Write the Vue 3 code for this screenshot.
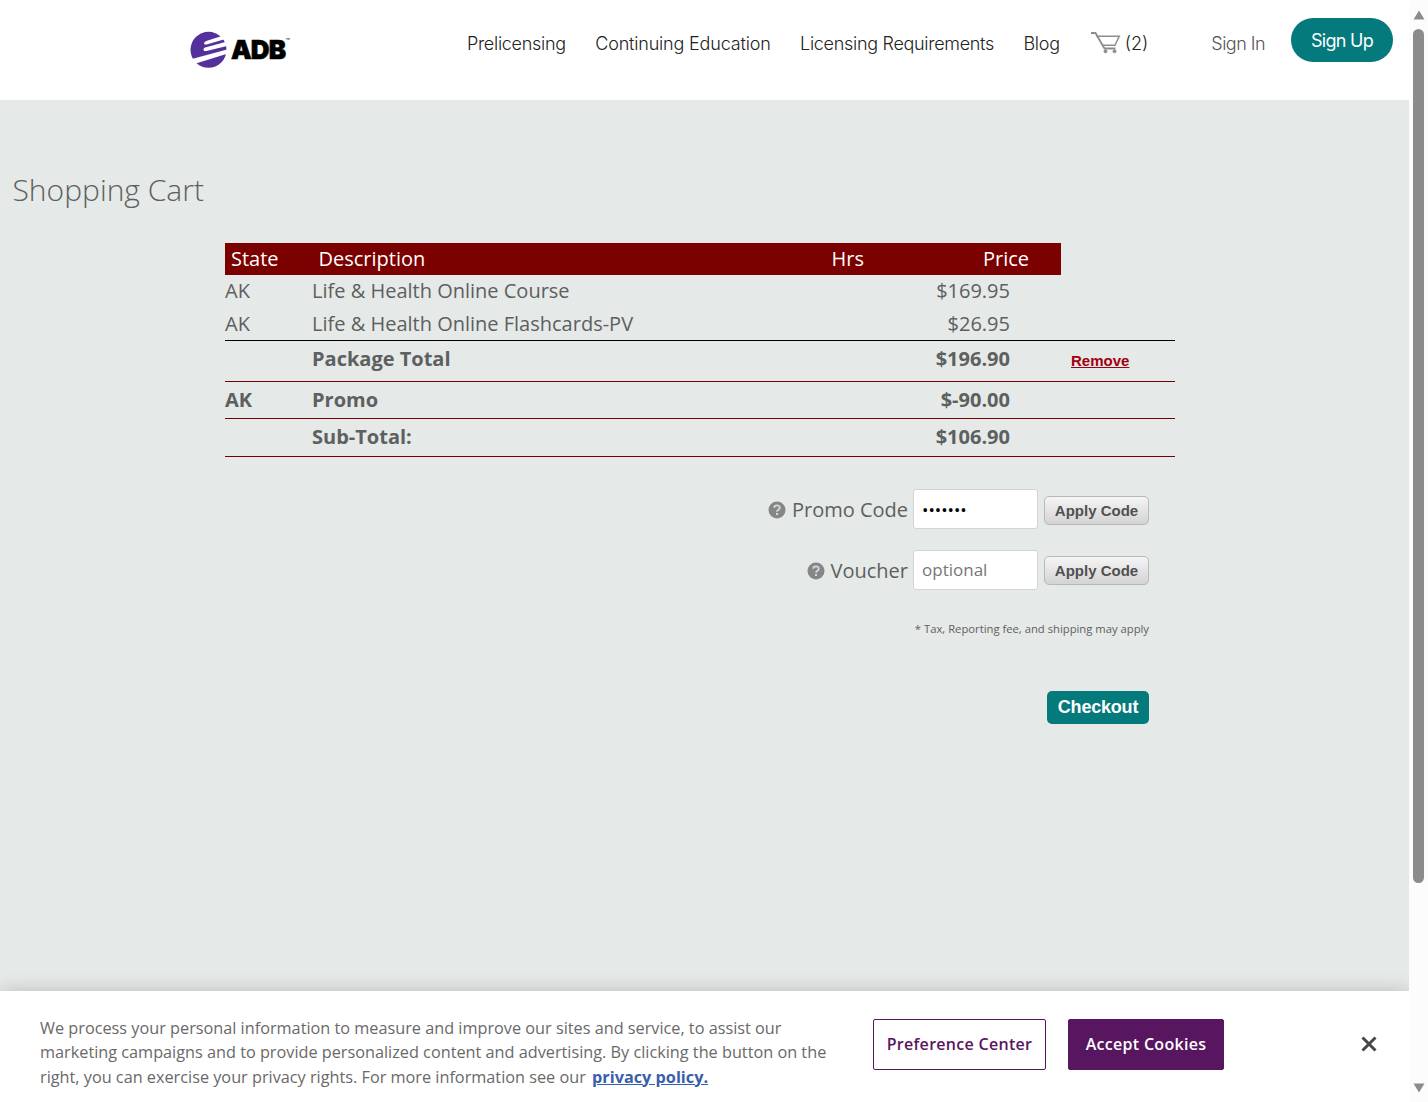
<template>
  <div class="window">
    <div class="page">
      <header class="topbar">
        <a class="logo">
          <svg class="logo-mark" width="38" height="38" viewBox="0 0 38 38">
            <circle cx="18.5" cy="18.800" r="18" fill="#54309a" />
            <path d="M14 12.200C14.500 11 15.500 10.300 17 9.800L38 3V7.200L17.500 13.200C15.500 13.700 14 13.300 14 12.200Z" fill="#fff" />
            <path d="M13.500 18.500C13.500 17.200 14.500 16.700 16 16.300L38 10.300V14.800L16.500 20C14.500 20.400 13.500 19.800 13.500 18.500Z" fill="#fff" />
            <path d="M0 28.500L38 18.300V22.500L5 32.800Z" fill="#fff" />
          </svg>
          <span class="logo-text">ADB</span><span class="logo-tm">™</span>
        </a>
        <nav class="nav">
          <a v-for="link in links" :key="link">{{ link }}</a>
        </nav>
        <a class="cart-link">
          <svg width="32" height="24" viewBox="0 0 32 24" fill="none" stroke="#8d8d8d">
            <path d="M1 2H5.500L14.500 17.500H25.500" stroke-width="1.800" />
            <path d="M6.500 5.300H29.200L25 14.300H12.500" stroke-width="1.500" />
            <circle cx="15.500" cy="20.300" r="1.500" fill="#8d8d8d" />
            <circle cx="24.500" cy="20.300" r="1.500" fill="#8d8d8d" />
          </svg>
          <span class="cart-count">(2)</span>
        </a>
        <a class="sign-in">Sign In</a>
        <a class="sign-up">Sign Up</a>
      </header>

      <main class="content">
        <h1>Shopping Cart</h1>

        <div class="cart">
          <div class="cart-head">
            <span>State</span>
            <span>Description</span>
            <span>Hrs</span>
            <span>Price</span>
          </div>
          <div v-for="row in rows" :key="row.description" class="cart-row" :class="row.type">
            <span>{{ row.state }}</span>
            <span>{{ row.description }}</span>
            <span class="price">{{ row.price }}</span>
            <a v-if="row.type === 'total'" class="remove">Remove</a>
          </div>
        </div>

        <div class="codes">
          <div v-for="field in fields" :key="field.label" class="code-row" :class="field.name">
            <svg class="help" width="18" height="18" viewBox="0 0 18 18">
              <circle cx="9" cy="9" r="8.500" fill="#858787" />
              <path d="M6.200 6.800C6.200 3.500 11.800 3.500 11.800 6.700C11.800 8.700 9 8.600 9 10.700" fill="none" stroke="#d5d9d7" stroke-width="1.800" />
              <rect x="8" y="12" width="2" height="2" fill="#d5d9d7" />
            </svg>
            <label>{{ field.label }}</label>
            <input v-model="field.value" :type="field.type" :placeholder="field.placeholder" />
            <button class="apply">Apply Code</button>
          </div>
          <p class="note">* Tax, Reporting fee, and shipping may apply</p>
          <button class="checkout">Checkout</button>
        </div>
      </main>

      <div v-if="showCookies" class="cookies">
        <p>
          We process your personal information to measure and improve our sites and service, to assist our<br />
          marketing campaigns and to provide personalized content and advertising. By clicking the button on the<br />
          right, you can exercise your privacy rights. For more information see our <a>privacy policy.</a>
        </p>
        <button class="preferences">Preference Center</button>
        <button class="accept" @click="showCookies = false">Accept Cookies</button>
        <button class="close" @click="showCookies = false">
          <svg width="16" height="16" viewBox="0 0 16 16">
            <path d="M1.500 1.500L14.500 14.500M14.500 1.500L1.500 14.500" stroke="#484848" stroke-width="3" />
          </svg>
        </button>
      </div>
    </div>

    <div class="scrollbar">
      <svg width="12" height="10" viewBox="0 0 12 10"><path d="M6 .5L11.500 9.500H.5Z" fill="#8b8b8b" /></svg>
      <div class="thumb"></div>
      <svg width="12" height="10" viewBox="0 0 12 10"><path d="M6 9.500L11.500 .5H.5Z" fill="#8b8b8b" /></svg>
    </div>
  </div>
</template>

<script setup>
import { ref } from "vue";

const links = ["Prelicensing", "Continuing Education", "Licensing Requirements", "Blog"];

const rows = [
  { state: "AK", description: "Life & Health Online Course", price: "$169.95", type: "item" },
  { state: "AK", description: "Life & Health Online Flashcards-PV", price: "$26.95", type: "item" },
  { state: "", description: "Package Total", price: "$196.90", type: "total" },
  { state: "AK", description: "Promo", price: "$-90.00", type: "promo" },
  { state: "", description: "Sub-Total:", price: "$106.90", type: "subtotal" },
];

const fields = ref([
  { name: "promo-code", label: "Promo Code", type: "password", value: "savings", placeholder: "" },
  { name: "voucher", label: "Voucher", type: "text", value: "", placeholder: "optional" },
]);

const showCookies = ref(true);
</script>

<style>
body {
  margin: 0;
  overflow: hidden;
}
</style>

<style scoped>
* {
  box-sizing: border-box;
}

.window {
  display: flex;
  width: 1428px;
  height: 1102px;
  overflow: hidden;
  font-family: "Open Sans", sans-serif;
  color: #5d6060;
  background: #fff;
}

.page {
  display: flex;
  flex-direction: column;
  width: 1409px;
  height: 1102px;
}

.topbar {
  display: flex;
  height: 100px;
  padding-left: 190px;
  background: #fff;
  font-family: Inter, sans-serif;
  font-size: 18px;
  font-weight: 300;
  line-height: 24px;
  color: #222;
  white-space: nowrap;
}

.logo {
  display: flex;
  width: 277px;
  padding-top: 31px;
}

.logo-text {
  margin-left: 3px;
  font-size: 26px;
  font-weight: 900;
  line-height: 37px;
  letter-spacing: -0.800px;
  color: #000;
  -webkit-text-stroke: 0.6px #000;
}

.logo-tm {
  font-size: 7px;
  font-weight: 500;
  line-height: 21px;
}

.nav {
  display: flex;
  gap: 29.500px;
  margin-top: 32px;
  letter-spacing: -0.300px;
}

.nav a:nth-child(2) {
  letter-spacing: -0.180px;
}

.cart-link {
  display: flex;
  margin: 31px 0 0 30px;
}

.cart-count {
  margin-left: 3px;
  line-height: 25px;
}

.sign-in {
  margin: 32px 0 0 63px;
  color: #555;
  letter-spacing: -0.500px;
}

.sign-up {
  width: 102px;
  height: 44px;
  margin: 18px 16px 0 auto;
  border-radius: 22px;
  background: #047a7c;
  color: #fff;
  font-weight: 400;
  line-height: 46px;
  letter-spacing: -0.700px;
  text-align: center;
}

.content {
  flex: 1;
  background: #e5e9e7;
}

h1 {
  margin: 0;
  padding: 68px 0 0 12.500px;
  font-size: 30px;
  font-weight: 300;
  line-height: 44px;
}

.cart {
  width: 950px;
  margin: 31px 0 0 225px;
  font-size: 20px;
}

.cart-head {
  display: grid;
  grid-template-columns: 87.500px 513px 151.500px 1fr;
  width: 836px;
  height: 32px;
  padding-left: 6px;
  background: #7b0000;
  color: #fff;
  line-height: 32px;
}

.cart-row {
  display: grid;
  grid-template-columns: 87px 600px 98px 1fr;
  height: 33px;
  line-height: 33px;
}

.cart-head + .cart-row {
  height: 32px;
  line-height: 31px;
}

.price {
  text-align: right;
}

.total,
.promo,
.subtotal {
  font-weight: 700;
  border-bottom: 1px solid #7b0000;
}

.total {
  height: 42px;
  border-top: 1px solid #000;
  line-height: 36px;
}

.promo {
  height: 37px;
  line-height: 36px;
}

.subtotal {
  height: 38px;
  line-height: 36px;
}

.remove {
  margin-left: 61px;
  font-family: "Liberation Sans", sans-serif;
  font-size: 15px;
  line-height: 40px;
  color: #a00010;
  text-decoration: underline;
}

.codes {
  display: flex;
  flex-direction: column;
  align-items: flex-end;
  width: 1149px;
  padding-top: 32px;
}

.code-row {
  display: flex;
  align-items: center;
  height: 40px;
  margin-bottom: 21px;
  font-size: 20px;
}

.help {
  margin: 2px 6px 0 0;
}

input {
  width: 125px;
  height: 40px;
  margin: 0 6px 0 5px;
  padding: 0 8px;
  border: 1px solid #d2d5d4;
  border-radius: 3px;
  background: #fff;
  color: #000;
  font-family: "Open Sans", sans-serif;
  font-size: 17px;
}

.voucher input {
  padding-bottom: 1px;
}

input::placeholder {
  color: #777;
}

.apply {
  width: 105px;
  height: 29px;
  margin-top: 3px;
  padding: 0;
  border: 1px solid #b8b8b8;
  border-radius: 5px;
  background: linear-gradient(#f5f5f5, #d3d3d3);
  color: #505050;
  font: bold 15px "Liberation Sans", sans-serif;
}

.voucher .apply {
  margin-top: 1px;
}

.note {
  margin: 10px 0 0;
  font-size: 11.250px;
  line-height: 16px;
}

.checkout {
  width: 102px;
  height: 33px;
  margin-top: 54px;
  padding: 0;
  border: 0;
  border-radius: 5px;
  background: #047a7c;
  color: #fff;
  font: bold 18px "Liberation Sans", sans-serif;
  letter-spacing: -0.200px;
}

.cookies {
  display: flex;
  position: relative;
  height: 111px;
  padding-left: 40px;
  background: #fff;
  box-shadow: 0 0 18px rgba(0, 0, 0, 0.2);
  clip-path: inset(-30px 0 0 0);
}

.cookies p {
  width: 833px;
  margin: 24.500px 0 0;
  color: #696969;
  font-size: 16.260px;
  line-height: 24.500px;
  white-space: nowrap;
}

.cookies p a {
  margin-left: 2px;
  color: #3860a9;
  font-weight: 700;
  text-decoration: underline;
}

.cookies button {
  padding: 0;
  font-family: "Open Sans", sans-serif;
  font-size: 16px;
  font-weight: 600;
  border-radius: 2px;
}

.cookies .preferences {
  width: 173px;
  height: 51px;
  margin-top: 28px;
  padding-bottom: 2px;
  border: 1px solid #581560;
  background: #fff;
  color: #581560;
  letter-spacing: 0.300px;
}

.cookies .accept {
  width: 156px;
  height: 51px;
  margin: 28px 0 0 22px;
  padding-bottom: 2px;
  border: 1px solid #581560;
  background: #581560;
  color: #fff;
  letter-spacing: 0.300px;
}

.cookies .close {
  width: 16px;
  height: 16px;
  margin: 45px 0 0 137px;
  border: 0;
  background: none;
}

.close svg {
  display: block;
}

.scrollbar {
  display: flex;
  flex-direction: column;
  align-items: center;
  width: 19px;
  padding: 10px 0 9px;
  background: #fcfcfc;
}

.thumb {
  width: 11px;
  height: 854px;
  margin: 9px 0 auto;
  border-radius: 6px;
  background: #8b8b8b;
}
</style>
